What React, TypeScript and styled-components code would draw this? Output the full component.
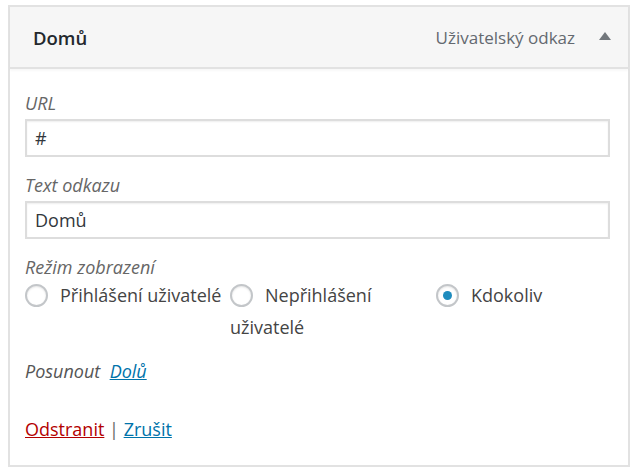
import styled, { createGlobalStyle } from 'styled-components';

const GlobalStyle = createGlobalStyle`
	body {
		margin: 0;
		background: #ffffff;
		font-family: 'Open Sans', 'Noto Sans', sans-serif;
		color: #444;
	}
`;

const Page = styled.div`
	padding: 5px 7px 0 8px;
	width: 622px;
`;

const Card = styled.div`
	border: 2px solid #e2e2e2;
	background: #fff;
`;

const Header = styled.div`
	display: flex;
	align-items: center;
	justify-content: space-between;
	height: 60px;
	padding: 0 17px 0 23px;
	background: #f6f6f6;
	border-bottom: 2px solid #e2e2e2;
	box-shadow: 0 2px 2px rgba(0, 0, 0, 0.03);
`;

const Title = styled.span`
	font-size: 18.5px;
	font-weight: 600;
	color: #23282d;
`;

const Meta = styled.div`
	display: flex;
	align-items: center;
	gap: 24px;
	font-size: 17px;
	color: #646970;
`;

const Arrow = styled.span`
	width: 0;
	height: 0;
	border-left: 6px solid transparent;
	border-right: 6px solid transparent;
	border-bottom: 8px solid #72777c;
	margin-top: -2px;
`;

const Body = styled.div`
	padding: 22px 18px 22px 15px;
`;

const Field = styled.div`
	display: flex;
	flex-direction: column;
	gap: 4px;
	margin-bottom: 16px;
`;

const Label = styled.span`
	font-size: 18px;
	font-style: italic;
	color: #666;
	line-height: 24px;
`;

const Input = styled.input`
	height: 38px;
	box-sizing: border-box;
	border: 2px solid #dddddd;
	box-shadow: inset 0 1px 2px rgba(0, 0, 0, 0.07);
	padding: 0 8px;
	font-family: inherit;
	font-size: 18px;
	color: #32373c;
	outline: none;
`;

const RadioGroup = styled.div`
	display: grid;
	grid-template-columns: 205px 206px 1fr;
	line-height: 32px;
	font-size: 18px;
	color: #444;
`;

const Option = styled.label`
	display: block;
`;

const Radio = styled.span<{ $checked?: boolean }>`
	display: inline-block;
	box-sizing: border-box;
	width: 23px;
	height: 23px;
	border-radius: 50%;
	border: 2px solid #c3c6c9;
	box-shadow: inset 0 1px 2px rgba(0, 0, 0, 0.1);
	vertical-align: -5px;
	margin-right: 12px;
	position: relative;
	&::after {
		content: '';
		display: ${(p) => (p.$checked ? 'block' : 'none')};
		position: absolute;
		left: 5px;
		top: 5px;
		width: 9px;
		height: 9px;
		border-radius: 50%;
		background: #1e8cbe;
	}
`;

const MoveRow = styled.div`
	margin-top: 14px;
	font-size: 18px;
	font-style: italic;
	color: #555;
	line-height: 28px;
`;

const Link = styled.a<{ $danger?: boolean }>`
	color: ${(p) => (p.$danger ? '#b30000' : '#0073aa')};
	text-decoration: underline;
	cursor: pointer;
`;

const Actions = styled.div`
	margin-top: 30px;
	font-size: 18px;
	line-height: 28px;
	color: #666;
`;

export default function App() {
	return (
		<>
			<GlobalStyle />
			<Page>
				<Card>
					<Header>
						<Title>Domů</Title>
						<Meta>
							<span>Uživatelský odkaz</span>
							<Arrow />
						</Meta>
					</Header>
					<Body>
						<Field>
							<Label>URL</Label>
							<Input defaultValue="#" />
						</Field>
						<Field>
							<Label>Text odkazu</Label>
							<Input defaultValue="Domů" />
						</Field>
						<Label>Režim zobrazení</Label>
						<RadioGroup>
							<Option>
								<Radio />
								Přihlášení uživatelé
							</Option>
							<Option>
								<Radio />
								Nepřihlášení uživatelé
							</Option>
							<Option>
								<Radio $checked />
								Kdokoliv
							</Option>
						</RadioGroup>
						<MoveRow>
							Posunout&nbsp; <Link>Dolů</Link>
						</MoveRow>
						<Actions>
							<Link $danger>Odstranit</Link> | <Link>Zrušit</Link>
						</Actions>
					</Body>
				</Card>
			</Page>
		</>
	);
}
